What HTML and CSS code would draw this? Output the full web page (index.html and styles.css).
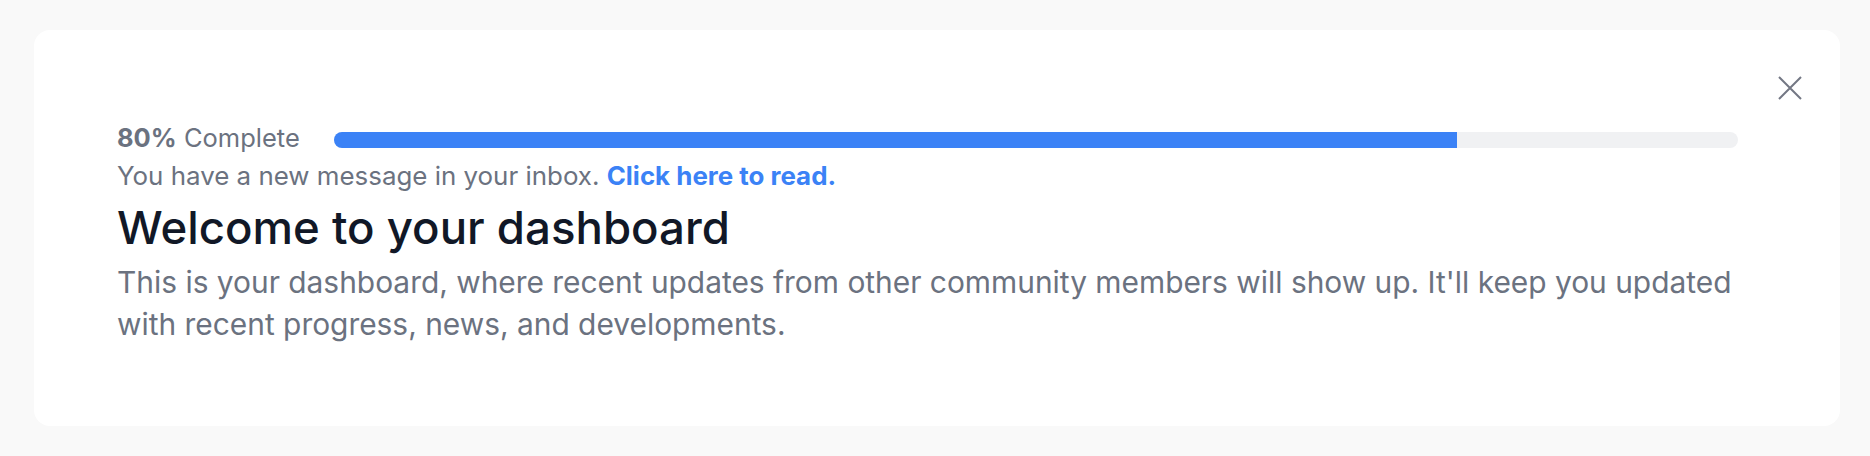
FILE: index.html
```html
<!DOCTYPE html>
<html lang="en">
<head>
    <meta charset="UTF-8">
    <meta name="viewport" content="width=device-width, initial-scale=1.0">
    <title>Dashboard</title>
    <link rel="stylesheet" href="styles.css">
</head>
<body>

    <div class="welcome-card">
        <div class="welcome-body">
            <div class="progress-row">
                <span class="progress-label"><strong>80%</strong> Complete</span>
                <div class="progress-track">
                    <div class="progress-fill" style="width: 80%;"></div>
                </div>
            </div>
            <p class="inbox-note">You have a new message in your inbox. <a href="#" class="inbox-link">Click here to read.</a></p>
            <h2 class="welcome-title">Welcome to your dashboard</h2>
            <p class="welcome-text">This is your dashboard, where recent updates from other community members will show up. It'll keep you updated with recent progress, news, and developments.</p>
        </div>

        <button class="close-btn" aria-label="Close">
            <svg width="24" height="24" viewBox="0 0 24 24" fill="none" stroke="currentColor" stroke-width="2">
                <path d="M1 1L23 23M23 1L1 23"/>
            </svg>
        </button>
    </div>

</body>
</html>
```

FILE: styles.css
```css
/* General Styles */
body {
    font-family: Inter, "Noto Sans", sans-serif;
    background: #f9f9f9;
    margin: 0;
    padding: 30px 30px 30px 34px;
}

/* Card */
.welcome-card {
    display: flex;
    align-items: flex-start;
    background: white;
    border-radius: 16px;
    padding: 46px 38px 81px 83px;
}

.welcome-body {
    flex: 1;
    padding-top: 43px;
}

/* Progress */
.progress-row {
    display: flex;
    align-items: center;
    gap: 34px;
}

.progress-label {
    font-size: 25.5px;
    line-height: 38px;
    color: #6b7280;
    white-space: nowrap;
}

.progress-label strong {
    font-weight: 700;
}

.progress-track {
    flex: 1;
    height: 16px;
    margin-top: 3px;
    background: #f0f1f3;
    border-radius: 8px;
    overflow: hidden;
}

.progress-fill {
    height: 100%;
    background: #3b82f6;
}

/* Texts */
.inbox-note {
    margin: 0;
    font-size: 25.9px;
    line-height: 38px;
    color: #6b7280;
}

.inbox-link {
    color: #3b82f6;
    font-weight: 700;
    text-decoration: none;
}

.welcome-title {
    margin: 5px 0 0;
    font-size: 45.6px;
    line-height: 56px;
    font-weight: 500;
    color: #111827;
}

.welcome-text {
    margin: 5px 0 0;
    font-size: 29.9px;
    line-height: 42px;
    color: #6b7280;
}

/* Close */
.close-btn {
    background: none;
    border: none;
    padding: 0;
    margin-left: 40px;
    color: #737784;
    cursor: pointer;
    line-height: 0;
}
```
